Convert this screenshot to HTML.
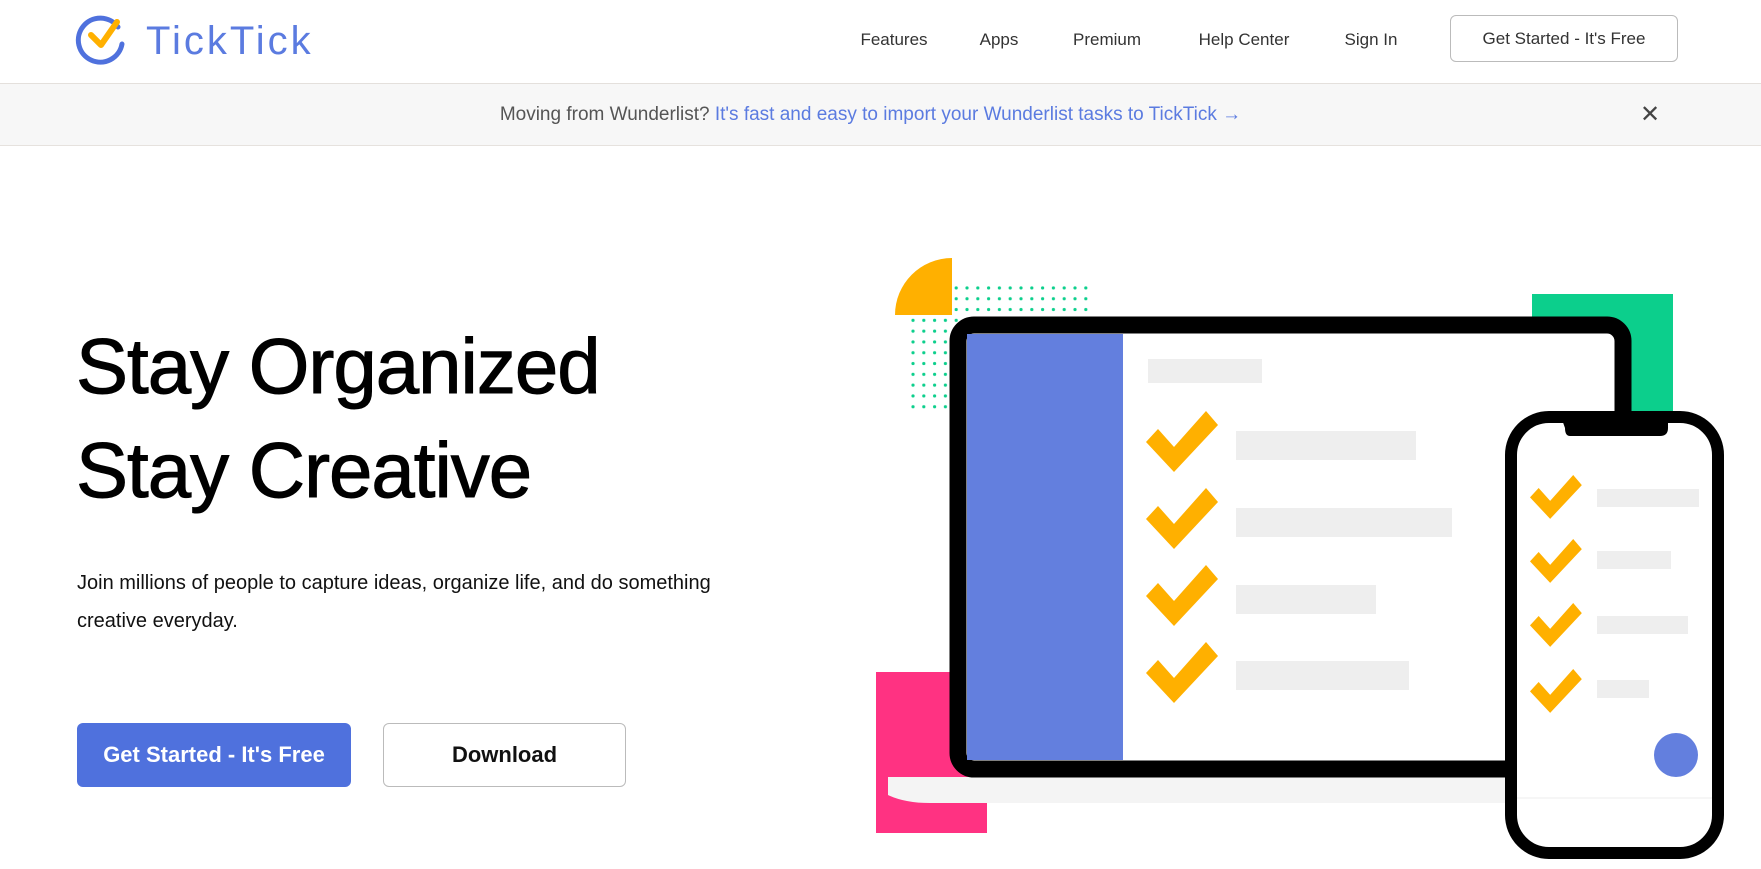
<!DOCTYPE html>
<html><head><meta charset="utf-8">
<style>
*{margin:0;padding:0;box-sizing:border-box}
body{width:1761px;height:869px;overflow:hidden;background:#fff;font-family:"Liberation Sans",Arial,sans-serif;position:relative;color:#111}
.nav{position:absolute;left:0;top:0;width:1761px;height:84px;border-bottom:1px solid #e4e0dc;background:#fff}
.nav a{position:absolute;top:30px;font-size:17px;color:#333;text-decoration:none;transform:translateX(-50%);white-space:nowrap}
.navbtn{position:absolute;left:1450px;top:15px;width:228px;height:47px;border:1px solid #bbb;border-radius:6px;font-size:17px;color:#333;display:flex;align-items:center;justify-content:center}
.banner{position:absolute;left:0;top:84px;width:1761px;height:62px;background:#f7f7f7;border-bottom:1px solid #e6e2de;font-size:19px;color:#555;display:flex;align-items:center;justify-content:center;padding-right:20px}
.banner span{color:#5b7be0}
.close{position:absolute;left:1640px;top:16px;font-size:24px;color:#444}
h1{position:absolute;left:76px;top:314px;font-size:78px;line-height:104px;font-weight:normal;color:#000;letter-spacing:-1px;-webkit-text-stroke:1px #000}
p.sub{position:absolute;left:77px;top:564px;width:690px;font-size:20px;line-height:38px;color:#111}
.b1{position:absolute;left:77px;top:723px;width:274px;height:64px;background:#4f71dd;border-radius:6px;color:#fff;font-weight:bold;font-size:22px;display:flex;align-items:center;justify-content:center}
.b2{position:absolute;left:383px;top:723px;width:243px;height:64px;border:1px solid #bbb;border-radius:6px;color:#111;font-weight:bold;font-size:22px;display:flex;align-items:center;justify-content:center}
svg.ill{position:absolute;left:0;top:0}
</style></head><body>
<div class="nav">
<svg width="340" height="84" style="position:absolute;left:0;top:0">
<path d="M118 27 A 22 22 0 1 0 122 44" fill="none" stroke="#4f71dd" stroke-width="5" stroke-linecap="round"/>
<path d="M91 35 L101 45 L117 22" fill="none" stroke="#ffb000" stroke-width="6" stroke-linecap="round" stroke-linejoin="round"/>
<text x="146" y="54" font-family="Liberation Sans, sans-serif" font-size="40" fill="#5b7be0" letter-spacing="3">TickTick</text>
</svg>
<a style="left:894px">Features</a>
<a style="left:999px">Apps</a>
<a style="left:1107px">Premium</a>
<a style="left:1244px">Help Center</a>
<a style="left:1371px">Sign In</a>
<div class="navbtn">Get Started - It's Free</div>
</div>
<div class="banner">Moving from Wunderlist?&nbsp;<span>It's fast and easy to import your Wunderlist tasks to TickTick →</span><div class="close">✕</div></div>
<h1>Stay Organized<br>Stay Creative</h1>
<p class="sub">Join millions of people to capture ideas, organize life, and do something creative everyday.</p>
<div class="b1">Get Started - It's Free</div>
<div class="b2">Download</div>
<svg class="ill" width="1761" height="869">
<defs>
<pattern id="dots" x="910" y="285" width="10.8" height="10.8" patternUnits="userSpaceOnUse"><circle cx="3" cy="3" r="1.6" fill="#0ccf8c"/></pattern>
<path id="chk" d="M0 31 L12 18 L28 36 L60 0 L72 14 L28 61 Z" fill="#ffb000"/>
</defs>
<rect x="910" y="285" width="180" height="130" fill="url(#dots)"/>
<path d="M952 258 L952 315 L895 315 A57 57 0 0 1 952 258 Z" fill="#ffb000"/>
<rect x="1532" y="294" width="141" height="120" fill="#0ccf8c"/>
<rect x="876" y="672" width="111" height="161" fill="#ff3282"/>
<rect x="888" y="777" width="640" height="26" fill="#f4f4f4"/>
<path d="M888 777 L888 795 Q905 803 930 803 L888 803 Z" fill="#ff3282"/>
<rect x="958" y="325" width="665" height="444" rx="16" fill="#fff" stroke="#000" stroke-width="17"/>
<rect x="967" y="334" width="156" height="426" fill="#637fde"/>
<rect x="1148" y="359" width="114" height="24" fill="#eee"/>
<use href="#chk" x="1146" y="411"/>
<use href="#chk" x="1146" y="488"/>
<use href="#chk" x="1146" y="565"/>
<use href="#chk" x="1146" y="642"/>
<rect x="1236" y="431" width="180" height="29" fill="#eee"/>
<rect x="1236" y="508" width="216" height="29" fill="#eee"/>
<rect x="1236" y="585" width="140" height="29" fill="#eee"/>
<rect x="1236" y="661" width="173" height="29" fill="#eee"/>
<rect x="1511" y="417" width="207" height="436" rx="38" fill="#fff" stroke="#000" stroke-width="12"/>
<path d="M1560 414 L1668 414 L1668 428 Q1668 436 1660 436 L1570 436 Q1565 436 1565 428 Z" fill="#000"/>
<line x1="1517" y1="798" x2="1712" y2="798" stroke="#eee" stroke-width="1"/>
<g transform="translate(1530 475) scale(0.72)"><use href="#chk"/></g>
<g transform="translate(1530 539) scale(0.72)"><use href="#chk"/></g>
<g transform="translate(1530 603) scale(0.72)"><use href="#chk"/></g>
<g transform="translate(1530 669) scale(0.72)"><use href="#chk"/></g>
<rect x="1597" y="489" width="102" height="18" fill="#eee"/>
<rect x="1597" y="551" width="74" height="18" fill="#eee"/>
<rect x="1597" y="616" width="91" height="18" fill="#eee"/>
<rect x="1597" y="680" width="52" height="18" fill="#eee"/>
<circle cx="1676" cy="755" r="22" fill="#637fde"/>
</svg>
</body></html>
